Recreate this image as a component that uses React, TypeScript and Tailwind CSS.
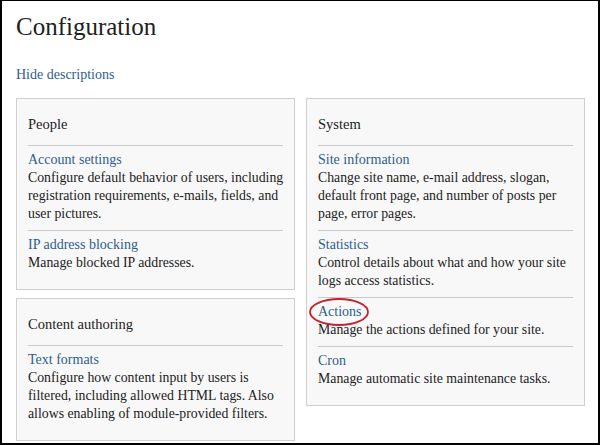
type Item = {
  title: string;
  desc: string;
};

type Panel = {
  name: string;
  items: Item[];
};

const people: Panel = {
  name: "People",
  items: [
    {
      title: "Account settings",
      desc: "Configure default behavior of users, including registration requirements, e-mails, fields, and user pictures.",
    },
    { title: "IP address blocking", desc: "Manage blocked IP addresses." },
  ],
};

const authoring: Panel = {
  name: "Content authoring",
  items: [
    {
      title: "Text formats",
      desc: "Configure how content input by users is filtered, including allowed HTML tags. Also allows enabling of module-provided filters.",
    },
  ],
};

const system: Panel = {
  name: "System",
  items: [
    {
      title: "Site information",
      desc: "Change site name, e-mail address, slogan, default front page, and number of posts per page, error pages.",
    },
    {
      title: "Statistics",
      desc: "Control details about what and how your site logs access statistics.",
    },
    { title: "Actions", desc: "Manage the actions defined for your site." },
    { title: "Cron", desc: "Manage automatic site maintenance tasks." },
  ],
};

function AdminPanel({ panel }: { panel: Panel }) {
  return (
    <div className="border border-[#cfcfcf] bg-[#f8f8f8] pl-[11px] pr-[8px] pt-[16px] pb-[10px]">
      <h3 className="text-[14.5px] leading-[18px] pb-[12px] mr-[3px]">{panel.name}</h3>
      {panel.items.map((item) => (
        <div key={item.title} className="border-t border-[#c8c8c8] pt-[5px] pb-[7px] mr-[3px]">
          <a href="#" className="block text-[#2e5e8c] leading-[18px]">
            {item.title}
          </a>
          <p className="text-[13.8px] leading-[18px] -mr-[3px]">{item.desc}</p>
        </div>
      ))}
    </div>
  );
}

export default function App() {
  return (
    <div className="relative w-[600px] h-[445px] overflow-hidden bg-white border-black border-t border-l-2 border-r-2 border-b-2 text-[14px] text-[#222] font-['Liberation_Serif',serif]">
      <div className="pl-[14px] pr-[13px]">
        <h1 className="pt-[11px] text-[25px] leading-[30px] font-normal">Configuration</h1>
        <a href="#" className="block mt-[24px] text-[#2e5e8c] leading-[18px]">
          Hide descriptions
        </a>

        <div className="mt-[14px] grid grid-cols-2 gap-[11px] items-start">
          <div className="flex flex-col gap-[8px]">
            <AdminPanel panel={people} />
            <AdminPanel panel={authoring} />
          </div>
          <AdminPanel panel={system} />
        </div>
      </div>

      {/* red highlight round "Actions" */}
      <svg className="absolute left-[305px] top-[295px]" width="66" height="33" viewBox="0 0 66 33">
        <ellipse cx="32" cy="16" rx="29" ry="13" fill="none" stroke="#c8202c" strokeWidth="1.8" />
      </svg>
    </div>
  );
}
